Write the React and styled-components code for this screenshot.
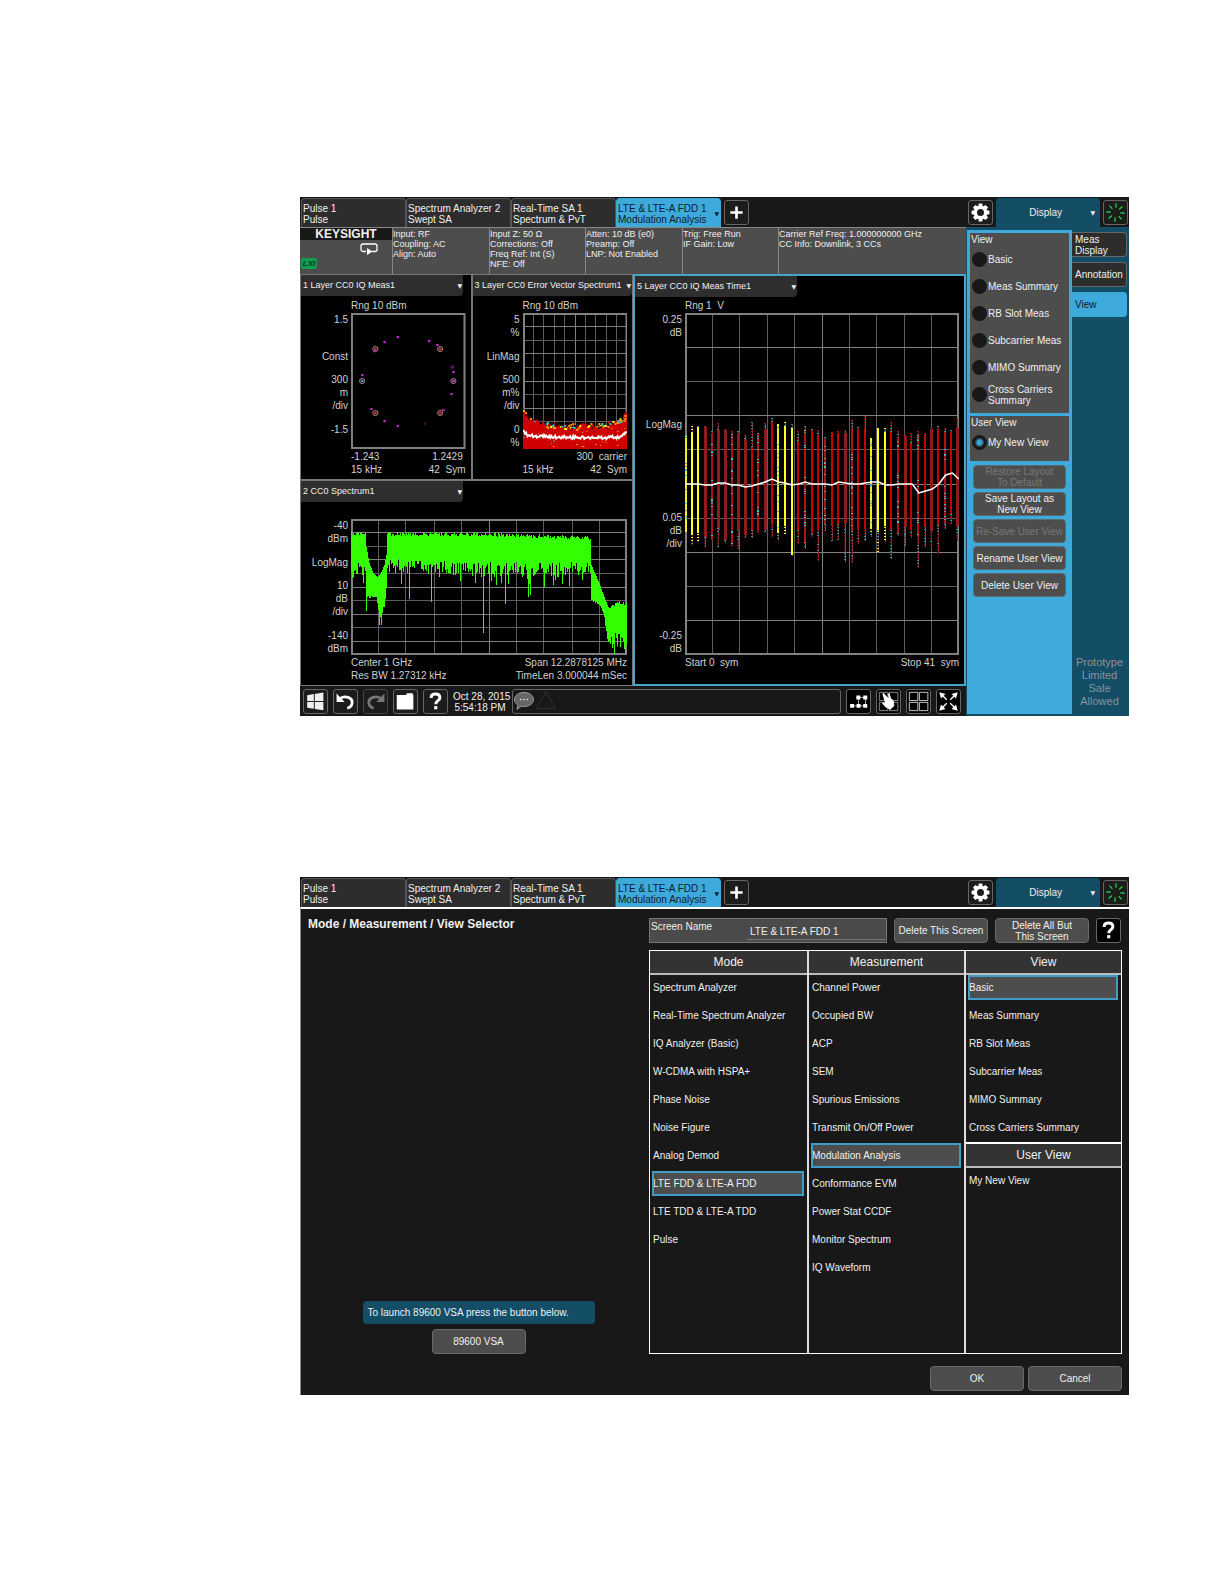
import React, { useState } from "react";
import styled, { createGlobalStyle, css } from "styled-components";

const GlobalStyle = createGlobalStyle`
  * {
    box-sizing: border-box;
  }
  body {
    margin: 0;
    background: #fff;
    font-family: "Liberation Sans", Arial, sans-serif;
    font-size: 10px;
    line-height: 11px;
    color: #f0f0f0;
  }
  button, select, input {
    font: inherit;
    color: inherit;
    margin: 0;
  }
`;

const screens = [
  ["Pulse 1", "Pulse"],
  ["Spectrum Analyzer 2", "Swept SA"],
  ["Real-Time SA 1", "Spectrum & PvT"],
  ["LTE & LTE-A FDD 1", "Modulation Analysis"],
];

const settings = [
  ["Input: RF", "Coupling: AC", "Align: Auto"],
  ["Input Z: 50 Ω", "Corrections: Off", "Freq Ref: Int (S)", "NFE: Off"],
  ["Atten: 10 dB (e0)", "Preamp: Off", "LNP: Not Enabled"],
  ["Trig: Free Run", "IF Gain: Low"],
  ["Carrier Ref Freq: 1.000000000 GHz", "CC Info: Downlink, 3 CCs"],
];

const views = [
  "Basic",
  "Meas Summary",
  "RB Slot Meas",
  "Subcarrier Meas",
  "MIMO Summary",
  "Cross Carriers Summary",
];

const modes = [
  "Spectrum Analyzer",
  "Real-Time Spectrum Analyzer",
  "IQ Analyzer (Basic)",
  "W-CDMA with HSPA+",
  "Phase Noise",
  "Noise Figure",
  "Analog Demod",
  "LTE FDD & LTE-A FDD",
  "LTE TDD & LTE-A TDD",
  "Pulse",
];

const measurements = [
  "Channel Power",
  "Occupied BW",
  "ACP",
  "SEM",
  "Spurious Emissions",
  "Transmit On/Off Power",
  "Modulation Analysis",
  "Conformance EVM",
  "Power Stat CCDF",
  "Monitor Spectrum",
  "IQ Waveform",
];

// small seeded generator, so the noise is the same on every render
const makeRandom = (seed) => () => {
  seed = (seed * 16807) % 2147483647;
  return seed / 2147483647;
};

const lerpPoints = (points, x) => {
  for (let i = 1; i < points.length; i++) {
    const [x0, y0] = points[i - 1];
    const [x1, y1] = points[i];
    if (x <= x1) return y0 + ((y1 - y0) * (x - x0)) / (x1 - x0 || 1);
  }
  return points[points.length - 1][1];
};

/* ---------- plots ---------- */

function Grid({ w, h, cols = 10, rows = 10 }) {
  const lines = [];
  for (let i = 1; i < cols; i++) {
    const x = Math.floor((w * i) / cols) + 0.5;
    lines.push(
      <path key={"v" + i} d={`M${x} 0V${h}`} stroke={i % 5 ? "#5c5c5c" : "#808080"} vectorEffect="non-scaling-stroke" />
    );
  }
  for (let i = 1; i < rows; i++) {
    const y = Math.floor((h * i) / rows) + 0.5;
    lines.push(
      <path key={"h" + i} d={`M0 ${y}H${w}`} stroke={i % 2 ? "#808080" : "#5c5c5c"} vectorEffect="non-scaling-stroke" />
    );
  }
  return <g shapeRendering="crispEdges">{lines}</g>;
}

function Frame({ w, h }) {
  return <rect x="1" y="1" width={w - 2} height={h - 2} fill="none" stroke="#808080" strokeWidth="2" />;
}

function ConstellationPlot() {
  const rings = [[24, 36, "#c33"], [88, 36, "#c33"], [11, 68, "#29c"], [101, 68, "#c3c"], [24, 100, "#c33"], [88, 100, "#c33"]];
  const dots = [
    [46, 24], [33, 29], [77, 28], [85, 32], [101, 59], [11, 62], [99, 81],
    [20, 96], [33, 108], [46, 113], [91, 97], [23, 38],
  ];
  return (
    <PlotSvg viewBox="0 0 113 136" $height={136} preserveAspectRatio="none">
      {rings.map(([x, y, c]) => (
        <g key={x + "-" + y}>
          <circle cx={x} cy={y} r="2.6" fill="none" stroke="#c8a0a0" strokeWidth="0.8" />
          <circle cx={x} cy={y} r="1.5" fill={c} />
        </g>
      ))}
      {dots.map(([x, y]) => (
        <rect key={x + "-" + y} x={x - 1} y={y - 1} width="2.4" height="2.2" fill="#b828c8" />
      ))}
      <circle cx="100" cy="54" r="1.2" fill="none" stroke="#b020c0" strokeWidth="0.8" />
      <path d="M73 109v3" stroke="#702020" />
      <Frame w={113} h={136} />
    </PlotSvg>
  );
}

function ErrorVectorPlot() {
  const rand = makeRandom(77);
  const edge = [[0, 95], [3, 102], [10, 107], [20, 110], [52, 112], [88, 110], [99, 106], [104, 96]];
  const mean = [[0, 118], [4, 121], [10, 123], [30, 124], [74, 125], [94, 124], [100, 122], [104, 118]];
  let area = "M0 136";
  let line = "";
  const specks = [];
  for (let x = 0; x <= 104; x++) {
    area += `L${x} ${(lerpPoints(edge, x) + rand() * 6 - 2).toFixed(1)}`;
    line += `${x ? "L" : "M"}${x} ${(lerpPoints(mean, x) + rand() * 3 - 1.5).toFixed(1)}`;
  }
  for (let i = 0; i < 120; i++) {
    const x = Math.floor(rand() * 102);
    const top = rand() > 0.35;
    const y = top ? lerpPoints(edge, x) + rand() * 6 - 2 : 112 + rand() * 22;
    specks.push([x, Math.round(y), ["#ff0", "#e8b000", "#3bc", "#400", "#f80"][Math.floor(rand() * 5)], top ? 2 : 1]);
  }
  return (
    <PlotSvg viewBox="0 0 104 136" $height={136} preserveAspectRatio="none">
      <Grid w={104} h={136} />
      <Frame w={104} h={136} />
      <path d={area + "L104 136Z"} fill="#d00000" />
      {specks.map(([x, y, c, s], i) => (
        <rect key={i} x={x} y={y} width={s} height={s} fill={c} />
      ))}
      <path d={line} fill="none" stroke="#fff" strokeWidth="2" />
    </PlotSvg>
  );
}

const spectrumTop = [
  [0, 14], [14, 14], [15, 28], [18, 44], [22, 54], [26, 58], [29, 55], [33, 46], [35, 36],
  [36, 15], [120, 15], [180, 17], [237, 19], [238, 46], [246, 64], [252, 81], [256, 90], [260, 86], [265, 84], [274, 85],
];
const spectrumBottom = [
  [0, 48], [14, 50], [15, 77], [25, 77], [27, 90], [30, 96], [33, 90], [35, 72], [36, 47],
  [120, 50], [237, 50], [238, 80], [247, 86], [251, 96], [254, 116], [262, 120], [274, 124],
];
const spikes = { 15: 92, 28: 106, 30: 106, 58: 80, 79: 83, 131: 114, 153: 85, 176: 78, 178: 76, 272: 134 };

function SpectrumPlot() {
  const rand = makeRandom(4242);
  let d = "";
  for (let x = 0; x < 274; x++) {
    const noisyTop = x < 14 || (x > 36 && x < 238) || x > 255;
    const noisyBottom = x < 14 || (x > 27 && x < 238) || x > 251;
    const top = lerpPoints(spectrumTop, x) + (noisyTop ? rand() * 4 - 2 : 0);
    const deep = rand() > 0.8 ? rand() * 14 : 0;
    const drop = noisyBottom ? rand() * 14 - 7 + deep : rand() * 2;
    const bottom = spikes[x] || Math.min(135, lerpPoints(spectrumBottom, x) + drop);
    d += `M${x + 0.5} ${top.toFixed(1)}V${bottom.toFixed(1)}`;
  }
  return (
    <PlotSvg viewBox="0 0 274 136" $height={136} preserveAspectRatio="none">
      <Grid w={274} h={136} />
      <Frame w={274} h={136} />
      <path d={d} stroke="#3f0" shapeRendering="crispEdges" />
    </PlotSvg>
  );
}

// kind, top of stem, top of bar, bottom of bar, bottom of stem
// y yellow, r red, d dark red, m red with cyan, c yellow with cyan
const symbols = [
  ["c", 121, 122, 219, 220], ["y", 113, 120, 222, 232], ["y", 113, 114, 220, 229], ["d", 113, 114, 225, 234],
  ["m", 118, 120, 227, 228], ["d", 110, 117, 217, 234], ["d", 116, 117, 227, 230], ["m", 118, 120, 231, 233],
  ["d", 118, 120, 217, 236], ["d", 122, 126, 222, 225], ["r", 109, 134, 217, 225], ["m", 120, 121, 218, 220],
  ["d", 110, 116, 217, 219], ["r", 105, 108, 211, 224], ["c", 111, 112, 220, 228], ["y", 109, 112, 213, 221],
  ["y", 111, 114, 242, 243], ["r", 118, 126, 217, 231], ["m", 113, 117, 230, 236], ["r", 116, 117, 222, 224],
  ["r", 117, 122, 217, 248], ["m", 124, 126, 212, 218], ["r", 119, 120, 213, 228], ["r", 118, 120, 213, 227],
  ["d", 117, 120, 210, 249], ["m", 107, 115, 218, 250], ["r", 114, 118, 217, 231], ["r", 103, 115, 216, 228],
  ["c", 125, 126, 215, 224], ["y", 115, 116, 219, 239], ["y", 115, 118, 213, 229], ["r", 109, 117, 217, 246],
  ["m", 118, 124, 220, 223], ["d", 122, 123, 214, 233], ["r", 120, 130, 217, 225], ["m", 118, 122, 224, 255],
  ["r", 120, 122, 213, 234], ["d", 114, 116, 218, 234], ["r", 113, 117, 213, 241], ["m", 115, 118, 212, 216],
  ["r", 117, 119, 201, 211], ["d", 105, 115, 213, 228],
];
const symbolColors = { y: "#ffff20", r: "#c40000", d: "#8e1c1c", m: "#b01018", c: "#f0f020" };
const timeMean = [
  171, 171, 171, 172, 172, 170, 170, 172, 172, 174, 173, 171, 169, 166, 169, 170, 172, 171, 169, 171, 171,
  171, 172, 169, 170, 171, 171, 170, 169, 169, 172, 172, 171, 171, 171, 180, 178, 176, 171, 162, 160, 166,
];

function TimePlot() {
  const rand = makeRandom(911);
  return (
    <PlotSvg viewBox="0 0 274 342" $height={342} preserveAspectRatio="none">
      <Grid w={274} h={342} />
      <Frame w={274} h={342} />
      <g shapeRendering="crispEdges">
        {symbols.map(([kind, a, b, c, d], i) => {
          const x = Math.min(272, Math.round(i * 6.66));
          const left = i ? x - 1 : 0;
          const dots = [];
          const mixed = kind === "m" || kind === "c";
          for (let n = 0; n < (mixed ? 14 : 0); n++) {
            dots.push([b + Math.floor(rand() * (c - b)), rand() > 0.6 ? "#809090" : "#30c8d0"]);
          }
          for (let y = a; y < d; y += 3) {
            if (y < b + 3 || y > c - 3) dots.push([y, rand() > 0.6 ? "#3a9090" : symbolColors[kind]]);
          }
          return (
            <g key={i}>
              <path d={`M${x + 0.5} ${a}V${d}`} stroke={i % 3 ? "#703038" : "#2a8080"} />
              <rect x={left} y={b} width={kind === "d" ? 3 : 2} height={c - b} fill={symbolColors[kind]} />
              {dots.map(([y, fill], n) => (
                <rect key={n} x={left} y={y} width="2" height="1" fill={fill} />
              ))}
            </g>
          );
        })}
      </g>
      <polyline
        points={timeMean.map((y, i) => `${(i * 274) / 41},${y}`).join(" ")}
        fill="none"
        stroke="#fff"
        strokeWidth="1.5"
      />
    </PlotSvg>
  );
}

/* ---------- icons ---------- */

const spokes = [0, 45, 90, 135, 180, 225, 270, 315];

function GearIcon() {
  return (
    <Icon viewBox="0 0 24 24">
      {spokes.map((a) => (
        <path key={a} d="M9.2 6.500L10 1.800h4l.8 4.700z" fill="#fff" transform={`rotate(${a} 12 12)`} />
      ))}
      <circle cx="12" cy="12" r="5.800" fill="none" stroke="#fff" strokeWidth="3.600" />
    </Icon>
  );
}

function BusyIcon() {
  return (
    <Icon viewBox="0 0 24 24">
      {spokes.map((a) => (
        <path key={a} d="M12 1.500v5" stroke="#22e84a" strokeWidth="1.300" transform={`rotate(${a + 4} 12 12)`} />
      ))}
    </Icon>
  );
}

const PlusIcon = () => (
  <Icon viewBox="0 0 24 24">
    <path d="M12 5v14M5 12h14" stroke="#fff" strokeWidth="3" />
  </Icon>
);

const HelpIcon = () => (
  <Icon viewBox="0 0 24 24">
    <path d="M7 8C7 5 9 3.500 12 3.500s5 1.500 5 4.200c0 3.300-4.700 3.300-4.700 7.300" fill="none" stroke="#fff" strokeWidth="3.400" />
    <rect x="10.500" y="17.300" width="3.600" height="3.600" fill="#fff" />
  </Icon>
);

const WindowsIcon = () => (
  <Icon viewBox="0 0 24 24">
    <path d="M2.500 4.800l7.600-1.300v7.900H2.500zM11.200 3.300L21 1.800v9.600h-9.800zM2.500 12.500h7.600v7.900l-7.600-1.300zM11.200 12.500H21v9.600l-9.800-1.500z" fill="#f0f0f0" />
  </Icon>
);

const UndoIcon = ({ flip, color = "#fff" }) => (
  <Icon viewBox="0 0 24 24">
    <g transform={flip ? "translate(24 0) scale(-1 1)" : undefined}>
      <path d="M6 8.500c5-3.500 14.500-1.500 13.500 5.500-.5 3-2.500 5-5.500 5.600" fill="none" stroke={color} strokeWidth="3.200" />
      <path d="M1.800 2.800v9.800h9.200z" fill={color} />
    </g>
  </Icon>
);

const FolderIcon = () => (
  <Icon viewBox="0 0 24 24">
    <path d="M2 4.500h10.500l1.200-2H20l1 2V21H2z" fill="#fff" />
  </Icon>
);

const BlocksIcon = () => (
  <Icon viewBox="0 0 24 24">
    <path d="M12 7.500h8M4 17h16M20 7.500V17M12 7.500V17" stroke="#bbb" />
    <path d="M9.500 5.200h4.600v4.400H9.500zM17.400 5.200H22v4.400h-4.600zM2.400 14.800H7v4.400H2.400zM9.800 14.800h4.600v4.400H9.800zM17.400 14.800H22v4.400h-4.600z" fill="#fff" />
  </Icon>
);

const PanesIcon = () => (
  <Icon viewBox="0 0 24 24">
    <path d="M1.500 1.500h9.700v9.400H1.500zM13 1.500h9.700v9.400H13zM1.500 13h9.700v9.400H1.500zM13 13h9.700v9.400H13z" fill="none" stroke="#ddd" />
  </Icon>
);

const TouchIcon = () => (
  <Icon viewBox="0 0 24 24">
    <path d="M1.500 1.500h9.700v9.400H1.500zM13 1.500h9.700v9.400H13zM1.500 13h9.700v9.400H1.500zM13 13h9.700v9.400H13z" fill="none" stroke="#999" />
    <path d="M5 3.200l1.600-.9 5.400 6.200-.6-5.700 1.700-.2 1.700 5.500 3.200 3.400.6 5.300-4.600 4.700-5.400-3-3.800-4.200.7-1.400 2.600.9z" fill="#fff" />
  </Icon>
);

const ExpandIcon = () => (
  <Icon viewBox="0 0 24 24">
    <path d="M4 4l6 6M20 4l-6 6M4 20l6-6M20 20l-6-6" stroke="#fff" strokeWidth="1.600" />
    <path d="M1.500 1.500l7 1.900-5.100 5.100zM22.500 1.500l-1.900 7-5.100-5.100zM1.500 22.500l1.900-7 5.100 5.100zM22.500 22.500l-7-1.900 5.100-5.100z" fill="#fff" />
  </Icon>
);

/* ---------- shared parts ---------- */

function ScreenTabs() {
  return (
    <TopBar>
      {screens.map(([name, meas], i) => (
        <ScreenTab key={name} $active={i === 3}>
          <span>
            {name}
            <br />
            {meas}
          </span>
          {i === 3 && <Arrow>▼</Arrow>}
        </ScreenTab>
      ))}
      <TopButtons>
        <IconButton aria-label="Add screen"><PlusIcon /></IconButton>
      </TopButtons>
      <TopButtons $end>
        <IconButton aria-label="System settings"><GearIcon /></IconButton>
        <DisplayTab>
          <span>Display</span>
          <Arrow>▼</Arrow>
        </DisplayTab>
        <IconButton aria-label="Busy"><BusyIcon /></IconButton>
      </TopButtons>
    </TopBar>
  );
}

function Trace({ title, range, labels, footer, children, selected }) {
  return (
    <TraceBox $selected={selected}>
      <TraceTitle>
        <select aria-label="Trace" defaultValue={title}>
          <option>{title}</option>
        </select>
        <Arrow>▼</Arrow>
      </TraceTitle>
      <TraceBody>
        <RangeText>{range}</RangeText>
        <Scale>
          {labels.map((group, i) => (
            <ScaleGroup key={i}>
              {group.map((text, n) => (
                <span key={n}>{text || "\u00a0"}</span>
              ))}
            </ScaleGroup>
          ))}
        </Scale>
        {children}
        <Footer>
          {footer.map(([left, right]) => (
            <FooterLine key={left + right}>
              <span>{left}</span>
              <span>{right}</span>
            </FooterLine>
          ))}
        </Footer>
      </TraceBody>
    </TraceBox>
  );
}

function AnalyzerScreen() {
  const [view, setView] = useState("My New View");

  return (
    <Screen>
      <ScreenTabs />
      <AnalyzerMain>
        <Measure>
          <SettingsBar>
            <LogoCell>
              <Logo>KEYSIGHT</Logo>
              <SweepIcon viewBox="0 0 18 13">
                <path d="M6 8.500H3A2 2 0 0 1 1 6.500V3a2 2 0 0 1 2-2h12a2 2 0 0 1 2 2v3.500a2 2 0 0 1-2 2H12" fill="none" stroke="#fff" strokeWidth="1.300" />
                <path d="M7 5l5.500 3.500L7 12z" fill="#fff" />
              </SweepIcon>
              <Lxi>LXI</Lxi>
            </LogoCell>
            {settings.map((lines) => (
              <SettingsCell key={lines[0]}>
                {lines.map((line) => (
                  <div key={line}>{line}</div>
                ))}
              </SettingsCell>
            ))}
          </SettingsBar>
          <Windows>
            <LeftWindows>
              <TopWindows>
                <Trace
                  title="1 Layer CC0 IQ Meas1"
                  range="Rng 10 dBm"
                  labels={[["1.5", ""], ["Const"], ["300", "m", "/div"], ["-1.5", ""]]}
                  footer={[["-1.243", "1.2429\u00a0"], ["15 kHz", "42\u00a0 Sym"]]}
                >
                  <ConstellationPlot />
                </Trace>
                <Trace
                  title="3 Layer CC0 Error Vector Spectrum1"
                  range="Rng 10 dBm"
                  labels={[["5", "%"], ["LinMag"], ["500", "m%", "/div"], ["0", "%"]]}
                  footer={[["", "300\u00a0 carrier"], ["15 kHz", "42\u00a0 Sym"]]}
                >
                  <ErrorVectorPlot />
                </Trace>
              </TopWindows>
              <Trace
                title="2 CC0 Spectrum1"
                range=""
                labels={[["-40", "dBm"], ["LogMag"], ["10", "dB", "/div"], ["-140", "dBm"]]}
                footer={[["Center 1 GHz", "Span 12.2878125 MHz"], ["Res BW 1.27312 kHz", "TimeLen 3.000044 mSec"]]}
              >
                <SpectrumPlot />
              </Trace>
            </LeftWindows>
            <Trace
              selected
              title="5 Layer CC0 IQ Meas Time1"
              range={"Rng 1\u00a0 V"}
              labels={[["0.25", "dB"], ["LogMag"], ["0.05", "dB", "/div"], ["-0.25", "dB"]]}
              footer={[["Start 0\u00a0 sym", "Stop 41\u00a0 sym"]]}
            >
              <TimePlot />
            </Trace>
          </Windows>
          <TaskBar>
            <IconButton aria-label="Windows"><WindowsIcon /></IconButton>
            <IconButton aria-label="Undo"><UndoIcon /></IconButton>
            <IconButton aria-label="Redo" $dim><UndoIcon flip color="#777" /></IconButton>
            <IconButton aria-label="Files"><FolderIcon /></IconButton>
            <IconButton aria-label="Help"><HelpIcon /></IconButton>
            <Clock>
              Oct 28, 2015
              <br />
              5:54:18 PM
            </Clock>
            <Messages>
              <MessageIcons viewBox="0 0 44 22">
                <path d="M11 2.500c5.500 0 9.500 3 9.500 7s-4 7-9.500 7c-1 0-2 0-2.800-.3L4 19.500l.6-4.600C2.600 13.500 1.500 11.600 1.500 9.500c0-4 4-7 9.500-7z" fill="#666" stroke="#999" />
                <path d="M7 9.500h1.500M10.300 9.500h1.500M13.600 9.500h1.500" stroke="#ddd" strokeWidth="1.500" />
                <path d="M33 1.500l9.500 17h-19z" fill="none" stroke="#303030" />
              </MessageIcons>
            </Messages>
            <IconButton aria-label="Block diagram" $black><BlocksIcon /></IconButton>
            <IconButton aria-label="Touch" $black><TouchIcon /></IconButton>
            <IconButton aria-label="Layout" $black><PanesIcon /></IconButton>
            <IconButton aria-label="Full screen" $black><ExpandIcon /></IconButton>
          </TaskBar>
        </Measure>
        <SidePanel>
          <ViewPanel>
            <ViewGroup>
              <GroupTitle>View</GroupTitle>
              {views.map((name) => (
                <RadioLabel key={name}>
                  <Radio name="view" checked={view === name} onChange={() => setView(name)} />
                  <span>{name}</span>
                </RadioLabel>
              ))}
            </ViewGroup>
            <ViewGroup>
              <GroupTitle>User View</GroupTitle>
              <RadioLabel>
                <Radio name="view" checked={view === "My New View"} onChange={() => setView("My New View")} />
                <span>My New View</span>
              </RadioLabel>
            </ViewGroup>
            <ViewButtons>
              <PanelButton disabled>
                Restore Layout
                <br />
                To Default
              </PanelButton>
              <PanelButton>
                Save Layout as
                <br />
                New View
              </PanelButton>
              <PanelButton disabled>Re-Save User View</PanelButton>
              <PanelButton>Rename User View</PanelButton>
              <PanelButton>Delete User View</PanelButton>
            </ViewButtons>
          </ViewPanel>
          <MenuTabs>
            <MenuTab>
              Meas
              <br />
              Display
            </MenuTab>
            <MenuTab>Annotation</MenuTab>
            <MenuTab $active>View</MenuTab>
            <Prototype>
              Prototype
              <br />
              Limited
              <br />
              Sale
              <br />
              Allowed
            </Prototype>
          </MenuTabs>
        </SidePanel>
      </AnalyzerMain>
    </Screen>
  );
}

function SelectorScreen() {
  const [mode, setMode] = useState("LTE FDD & LTE-A FDD");
  const [meas, setMeas] = useState("Modulation Analysis");
  const [view, setView] = useState("Basic");
  const [screenName, setScreenName] = useState("LTE & LTE-A FDD 1");

  const renderItems = (items, value, onPick) => (
    <Items>
      {items.map((name) => (
        <Item key={name} $selected={value === name} onClick={() => onPick(name)}>
          {name}
        </Item>
      ))}
    </Items>
  );

  return (
    <Screen>
      <ScreenTabs />
      <Selector>
        <SelectorLeft>
          <SelectorTitle>Mode / Measurement / View Selector</SelectorTitle>
          <Launch>
            <LaunchText>To launch 89600 VSA press the button below.</LaunchText>
            <GreyButton>89600 VSA</GreyButton>
          </Launch>
        </SelectorLeft>
        <SelectorRight>
          <NameRow>
            <NameField>
              <span>Screen Name</span>
              <input value={screenName} onChange={(e) => setScreenName(e.target.value)} />
            </NameField>
            <GreyButton>Delete This Screen</GreyButton>
            <GreyButton>
              Delete All But
              <br />
              This Screen
            </GreyButton>
            <IconButton aria-label="Help" $black><HelpIcon /></IconButton>
          </NameRow>
          <Columns>
            <Column>
              <ColumnTitle>Mode</ColumnTitle>
              {renderItems(modes, mode, setMode)}
            </Column>
            <Column>
              <ColumnTitle>Measurement</ColumnTitle>
              {renderItems(measurements, meas, setMeas)}
            </Column>
            <Column>
              <ColumnTitle>View</ColumnTitle>
              {renderItems(views, view, setView)}
              <ColumnTitle $sub>User View</ColumnTitle>
              {renderItems(["My New View"], view, setView)}
            </Column>
          </Columns>
          <Actions>
            <GreyButton>OK</GreyButton>
            <GreyButton>Cancel</GreyButton>
          </Actions>
        </SelectorRight>
      </Selector>
    </Screen>
  );
}

export default function App() {
  return (
    <Page>
      <GlobalStyle />
      <AnalyzerScreen />
      <SelectorScreen />
    </Page>
  );
}

/* ---------- styles ---------- */

const Page = styled.main`
  display: flex;
  flex-direction: column;
  gap: 161px;
  padding: 197px 95px 189px 300px;
`;

const Screen = styled.section`
  background: #181818;
`;

const TopBar = styled.div`
  display: grid;
  grid-template-columns: repeat(4, 105px) auto 1fr;
  height: 30px;
  padding: 1px 1px 0 1px;
`;

const Arrow = styled.span`
  font-family: "DejaVu Sans", sans-serif;
  font-size: 6px;
`;

const ScreenTab = styled.button`
  display: flex;
  align-items: center;
  justify-content: space-between;
  padding: 1px 1px 0 1px;
  text-align: left;
  white-space: nowrap;
  background: #2d2d2d;
  border: 1px solid #555;
  border-bottom: 0;
  border-radius: 4px 4px 0 0;

  ${(p) =>
    p.$active &&
    css`
      background: #3eaadb;
      border-color: #3eaadb;
      color: #0a2029;
    `}
`;

const TopButtons = styled.div`
  display: flex;
  align-items: center;
  gap: 3px;
  padding-left: 3px;
  justify-content: ${(p) => (p.$end ? "flex-end" : "flex-start")};
`;

const IconButton = styled.button`
  flex: none;
  display: grid;
  place-items: center;
  width: 25px;
  height: 25px;
  padding: 1px;
  border: 1px solid ${(p) => (p.$dim ? "#444" : "#666")};
  border-radius: 3px;
  background: ${(p) => (p.$black ? "#000" : "#1c1c1c")};
`;

const Icon = styled.svg`
  display: block;
  width: 21px;
  height: 21px;
`;

const DisplayTab = styled.button`
  display: grid;
  grid-template-columns: 1fr auto;
  align-items: center;
  width: 104px;
  height: 29px;
  padding: 0 5px;
  border: 0;
  border-radius: 4px 4px 0 0;
  background: #134d66;
`;

const AnalyzerMain = styled.div`
  display: grid;
  grid-template-columns: minmax(0, 1fr) 163px;
`;

const Measure = styled.div`
  display: flex;
  flex-direction: column;
`;

const SettingsBar = styled.div`
  display: grid;
  grid-template-columns: 92px 97px 96px 97px 96px 1fr;
  height: 47px;
  border-top: 1px solid #888;
  background: #4d4d4d;
  font-size: 9px;
  line-height: 10px;
`;

const SettingsCell = styled.div`
  padding-top: 1px;
  border-left: 1px solid #888;
  white-space: nowrap;
`;

const LogoCell = styled.div`
  display: flex;
  flex-direction: column;
`;

const Logo = styled.div`
  background: #181818;
  font-size: 12px;
  line-height: 12px;
  font-weight: bold;
  text-align: center;
`;

const SweepIcon = styled.svg`
  width: 18px;
  height: 13px;
  margin: 3px 14px 0 auto;
`;

const Lxi = styled.div`
  width: 16px;
  margin: 2px 0 0 1px;
  border-radius: 2px;
  background: #0d9e4f;
  color: #032;
  font-weight: bold;
  font-style: italic;
  font-size: 8px;
  line-height: 11px;
  text-align: center;
`;

const Windows = styled.div`
  display: grid;
  grid-template-columns: minmax(0, 1fr) minmax(0, 1fr);
  min-height: 412px;
`;

const LeftWindows = styled.div`
  display: grid;
  grid-template-rows: 1fr 1fr;
`;

const TopWindows = styled.div`
  display: grid;
  grid-template-columns: minmax(0, 171fr) minmax(0, 161fr);
`;

const TraceBox = styled.section`
  display: flex;
  flex-direction: column;
  justify-content: space-between;
  background: #000;
  border-style: solid;
  border-color: ${(p) => (p.$selected ? "#4aa3c9" : "#777")};
  border-width: ${(p) => (p.$selected ? "2px" : "1px")};
  padding-bottom: ${(p) => (p.$selected ? "15px" : "3px")};
`;

const TraceTitle = styled.label`
  display: flex;
  align-items: center;
  width: 162px;
  max-width: 100%;
  height: 21px;
  padding: 0 1px 0 2px;
  background: #2e2e2e;
  border-radius: 0 0 4px 0;

  select {
    flex: 1;
    min-width: 0;
    appearance: none;
    padding: 0;
    border: 0;
    background: transparent;
    font-size: 9px;
  }
`;

const TraceBody = styled.div`
  display: grid;
  grid-template-columns: 50px minmax(0, 1fr);
  padding-right: 5px;
  line-height: 13px;
  color: #d0d0d0;
`;

const RangeText = styled.div`
  grid-column: 2;
  height: 14px;
`;

const Scale = styled.div`
  display: flex;
  flex-direction: column;
  justify-content: space-between;
  padding-right: 3px;
  text-align: right;
`;

const ScaleGroup = styled.div`
  display: flex;
  flex-direction: column;
`;

const PlotSvg = styled.svg`
  display: block;
  width: 100%;
  height: ${(p) => p.$height}px;
`;

const Footer = styled.div`
  grid-column: 2;
  padding-top: 1px;
  white-space: nowrap;
`;

const FooterLine = styled.div`
  display: flex;
  justify-content: space-between;
`;

const TaskBar = styled.div`
  display: flex;
  gap: 5px;
  padding: 3px 5px 2px 3px;
`;

const Clock = styled.div`
  width: 54px;
  padding-top: 2px;
  text-align: center;
  white-space: nowrap;
`;

const Messages = styled.div`
  flex: 1;
  height: 25px;
  border: 1px solid #666;
  border-radius: 3px;
`;

const MessageIcons = styled.svg`
  display: block;
  width: 44px;
  height: 22px;
`;

const SidePanel = styled.aside`
  display: grid;
  grid-template-columns: 105px 1fr;
  padding: 3px 2px 2px 1px;
  background: #134d66;
`;

const ViewPanel = styled.div`
  display: flex;
  flex-direction: column;
  gap: 3px;
  padding: 3px;
  background: #3eaadb;
`;

const ViewGroup = styled.div`
  padding: 0 1px 5px;
  background: #4d4d4d;
`;

const GroupTitle = styled.div`
  height: 13px;
  padding-top: 1px;
`;

const RadioLabel = styled.label`
  display: flex;
  align-items: center;
  gap: 1px;
  height: 27px;
  padding-left: 1px;
`;

const Radio = styled.input.attrs({ type: "radio" })`
  flex: none;
  appearance: none;
  width: 15px;
  height: 15px;
  border-radius: 50%;
  background: #181818;

  &:checked {
    background: radial-gradient(#3eaadb 0 2px, #181818 5px);
  }
`;

const ViewButtons = styled.div`
  display: flex;
  flex-direction: column;
  gap: 3px;
  padding: 1px 3px;
`;

const PanelButton = styled.button`
  height: 24px;
  padding: 0;
  border: 1px solid #5c6a70;
  border-radius: 4px;
  background: #4d4d4d;
  white-space: nowrap;

  &:disabled {
    color: #777;
  }
`;

const MenuTabs = styled.div`
  display: flex;
  flex-direction: column;
  gap: 5px;
  padding-top: 2px;
`;

const MenuTab = styled.button`
  height: 25px;
  padding: 0 3px;
  text-align: left;
  border: 1px solid ${(p) => (p.$active ? "#3eaadb" : "#666")};
  border-left: 0;
  border-radius: 0 4px 4px 0;
  background: ${(p) => (p.$active ? "#3eaadb" : "#2d2d2d")};
  color: ${(p) => (p.$active ? "#0a2029" : "#f0f0f0")};
`;

const Prototype = styled.div`
  margin-top: auto;
  padding-bottom: 6px;
  font-size: 11px;
  line-height: 13px;
  text-align: center;
  color: #8a9396;
`;

const Selector = styled.div`
  display: grid;
  grid-template-columns: minmax(0, 1fr) minmax(0, 473px);
  border-top: 2px solid #fff;
  border-left: 1px solid #888;
  padding: 9px 7px 4px;
`;

const SelectorLeft = styled.div`
  display: flex;
  flex-direction: column;
  justify-content: space-between;
`;

const SelectorTitle = styled.h1`
  margin: 0;
  font-size: 12px;
  line-height: 13px;
`;

const Launch = styled.div`
  display: flex;
  flex-direction: column;
  align-items: center;
  gap: 5px;
  padding-bottom: 37px;
`;

const LaunchText = styled.div`
  width: 232px;
  padding: 6px 5px;
  border-radius: 4px;
  background: #134d66;
`;

const GreyButton = styled.button`
  width: 94px;
  height: 25px;
  padding: 0;
  border: 1px solid #6a6a6a;
  border-radius: 4px;
  background: #4d4d4d;
  white-space: nowrap;
`;

const SelectorRight = styled.div`
  display: flex;
  flex-direction: column;
`;

const NameRow = styled.div`
  display: grid;
  grid-template-columns: minmax(0, 1fr) auto auto auto;
  gap: 7px;
  padding-right: 1px;
`;

const NameField = styled.label`
  display: grid;
  grid-template-columns: 96px minmax(0, 1fr);
  height: 25px;
  padding: 2px 1px;
  border: 1px solid #777;
  background: #4a4a4a;

  input {
    min-width: 0;
    margin-top: 3px;
    padding: 0 3px;
    border: 0;
    border-bottom: 1px solid #777;
    background: transparent;
  }
`;

const Columns = styled.div`
  display: grid;
  grid-template-columns: repeat(3, minmax(0, 1fr));
  min-height: 404px;
  margin-top: 7px;
  border: 1px solid #fff;
`;

const Column = styled.div`
  & + & {
    border-left: 2px solid #ddd;
  }
`;

const ColumnTitle = styled.h2`
  margin: 0;
  height: 24px;
  font-size: 12px;
  line-height: 22px;
  font-weight: normal;
  text-align: center;
  background: #333;
  border-bottom: 2px solid #bbb;

  ${(p) =>
    p.$sub &&
    css`
      height: 26px;
      border-top: 2px solid #fff;
    `}
`;

const Items = styled.div`
  display: flex;
  flex-direction: column;
  gap: 3px;
  padding: 0 3px 2px 2px;
`;

const Item = styled.button`
  height: 25px;
  padding: 0 1px;
  text-align: left;
  white-space: nowrap;
  border: 0;
  outline: 2px solid ${(p) => (p.$selected ? "#3f9cc6" : "transparent")};
  outline-offset: -2px;
  background: ${(p) => (p.$selected ? "#4d4d4d" : "transparent")};
`;

const Actions = styled.div`
  display: flex;
  justify-content: flex-end;
  gap: 4px;
  padding-top: 12px;
`;
